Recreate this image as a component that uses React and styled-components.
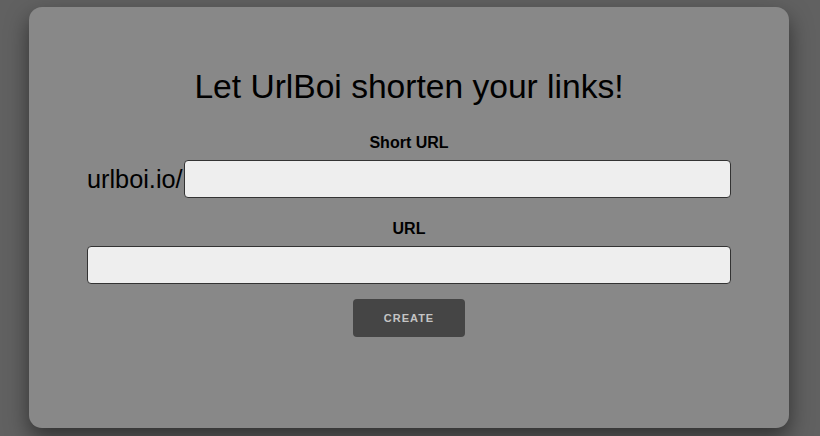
import React from "react";
import styled, { createGlobalStyle } from "styled-components";

const Global = createGlobalStyle`
  html, body { margin: 0; padding: 0; }
  body {
    background: #616161;
    font-family: "Liberation Sans", Arial, sans-serif;
    width: 820px;
    height: 436px;
    overflow: hidden;
  }
`;

const Page = styled.div`
  padding: 7px 31px 8px 29px;
  height: 436px;
  box-sizing: border-box;
`;

const Card = styled.main`
  box-sizing: border-box;
  height: 421px;
  background: #888888;
  border-radius: 13px;
  box-shadow: 0 10px 22px rgba(0, 0, 0, 0.5);
  padding: 60px 58px 0;
  display: flex;
  flex-direction: column;
  align-items: stretch;
`;

const Title = styled.h1`
  margin: 0 0 27px;
  font-size: 33.6px;
  font-weight: 400;
  text-align: center;
  color: #000;
  line-height: 40px;
`;

const Label = styled.label`
  display: block;
  text-align: center;
  font-size: 16px;
  font-weight: 700;
  color: #000;
  line-height: 18px;
  margin-bottom: 8px;
`;

const Row = styled.div`
  display: flex;
  align-items: center;
  margin-bottom: ${(p) => p.$mb || 0}px;
`;

const Prefix = styled.span`
  font-size: 25.3px;
  color: #000;
  line-height: 28px;
  margin-right: 1px;
`;

const Input = styled.input`
  flex: 1;
  min-width: 0;
  height: 38px;
  box-sizing: border-box;
  background: #eeeeee;
  border: 1px solid #333;
  border-radius: 4px;
  font-size: 16px;
  padding: 0 8px;
  outline: none;
`;

const ButtonRow = styled.div`
  display: flex;
  justify-content: center;
`;

const Button = styled.button`
  width: 112px;
  height: 38px;
  background: #454545;
  color: #c4c4c4;
  border: none;
  border-radius: 4px;
  font-family: "Liberation Sans", Arial, sans-serif;
  font-size: 11px;
  font-weight: 700;
  letter-spacing: 1px;
  padding-top: 1px;
  cursor: pointer;
`;

export default function App() {
  return (
    <>
      <Global />
      <Page>
        <Card>
          <Title>Let UrlBoi shorten your links!</Title>
          <Label>Short URL</Label>
          <Row $mb={22}>
            <Prefix>urlboi.io/</Prefix>
            <Input type="text" />
          </Row>
          <Label>URL</Label>
          <Row $mb={15}>
            <Input type="text" />
          </Row>
          <ButtonRow>
            <Button>CREATE</Button>
          </ButtonRow>
        </Card>
      </Page>
    </>
  );
}
